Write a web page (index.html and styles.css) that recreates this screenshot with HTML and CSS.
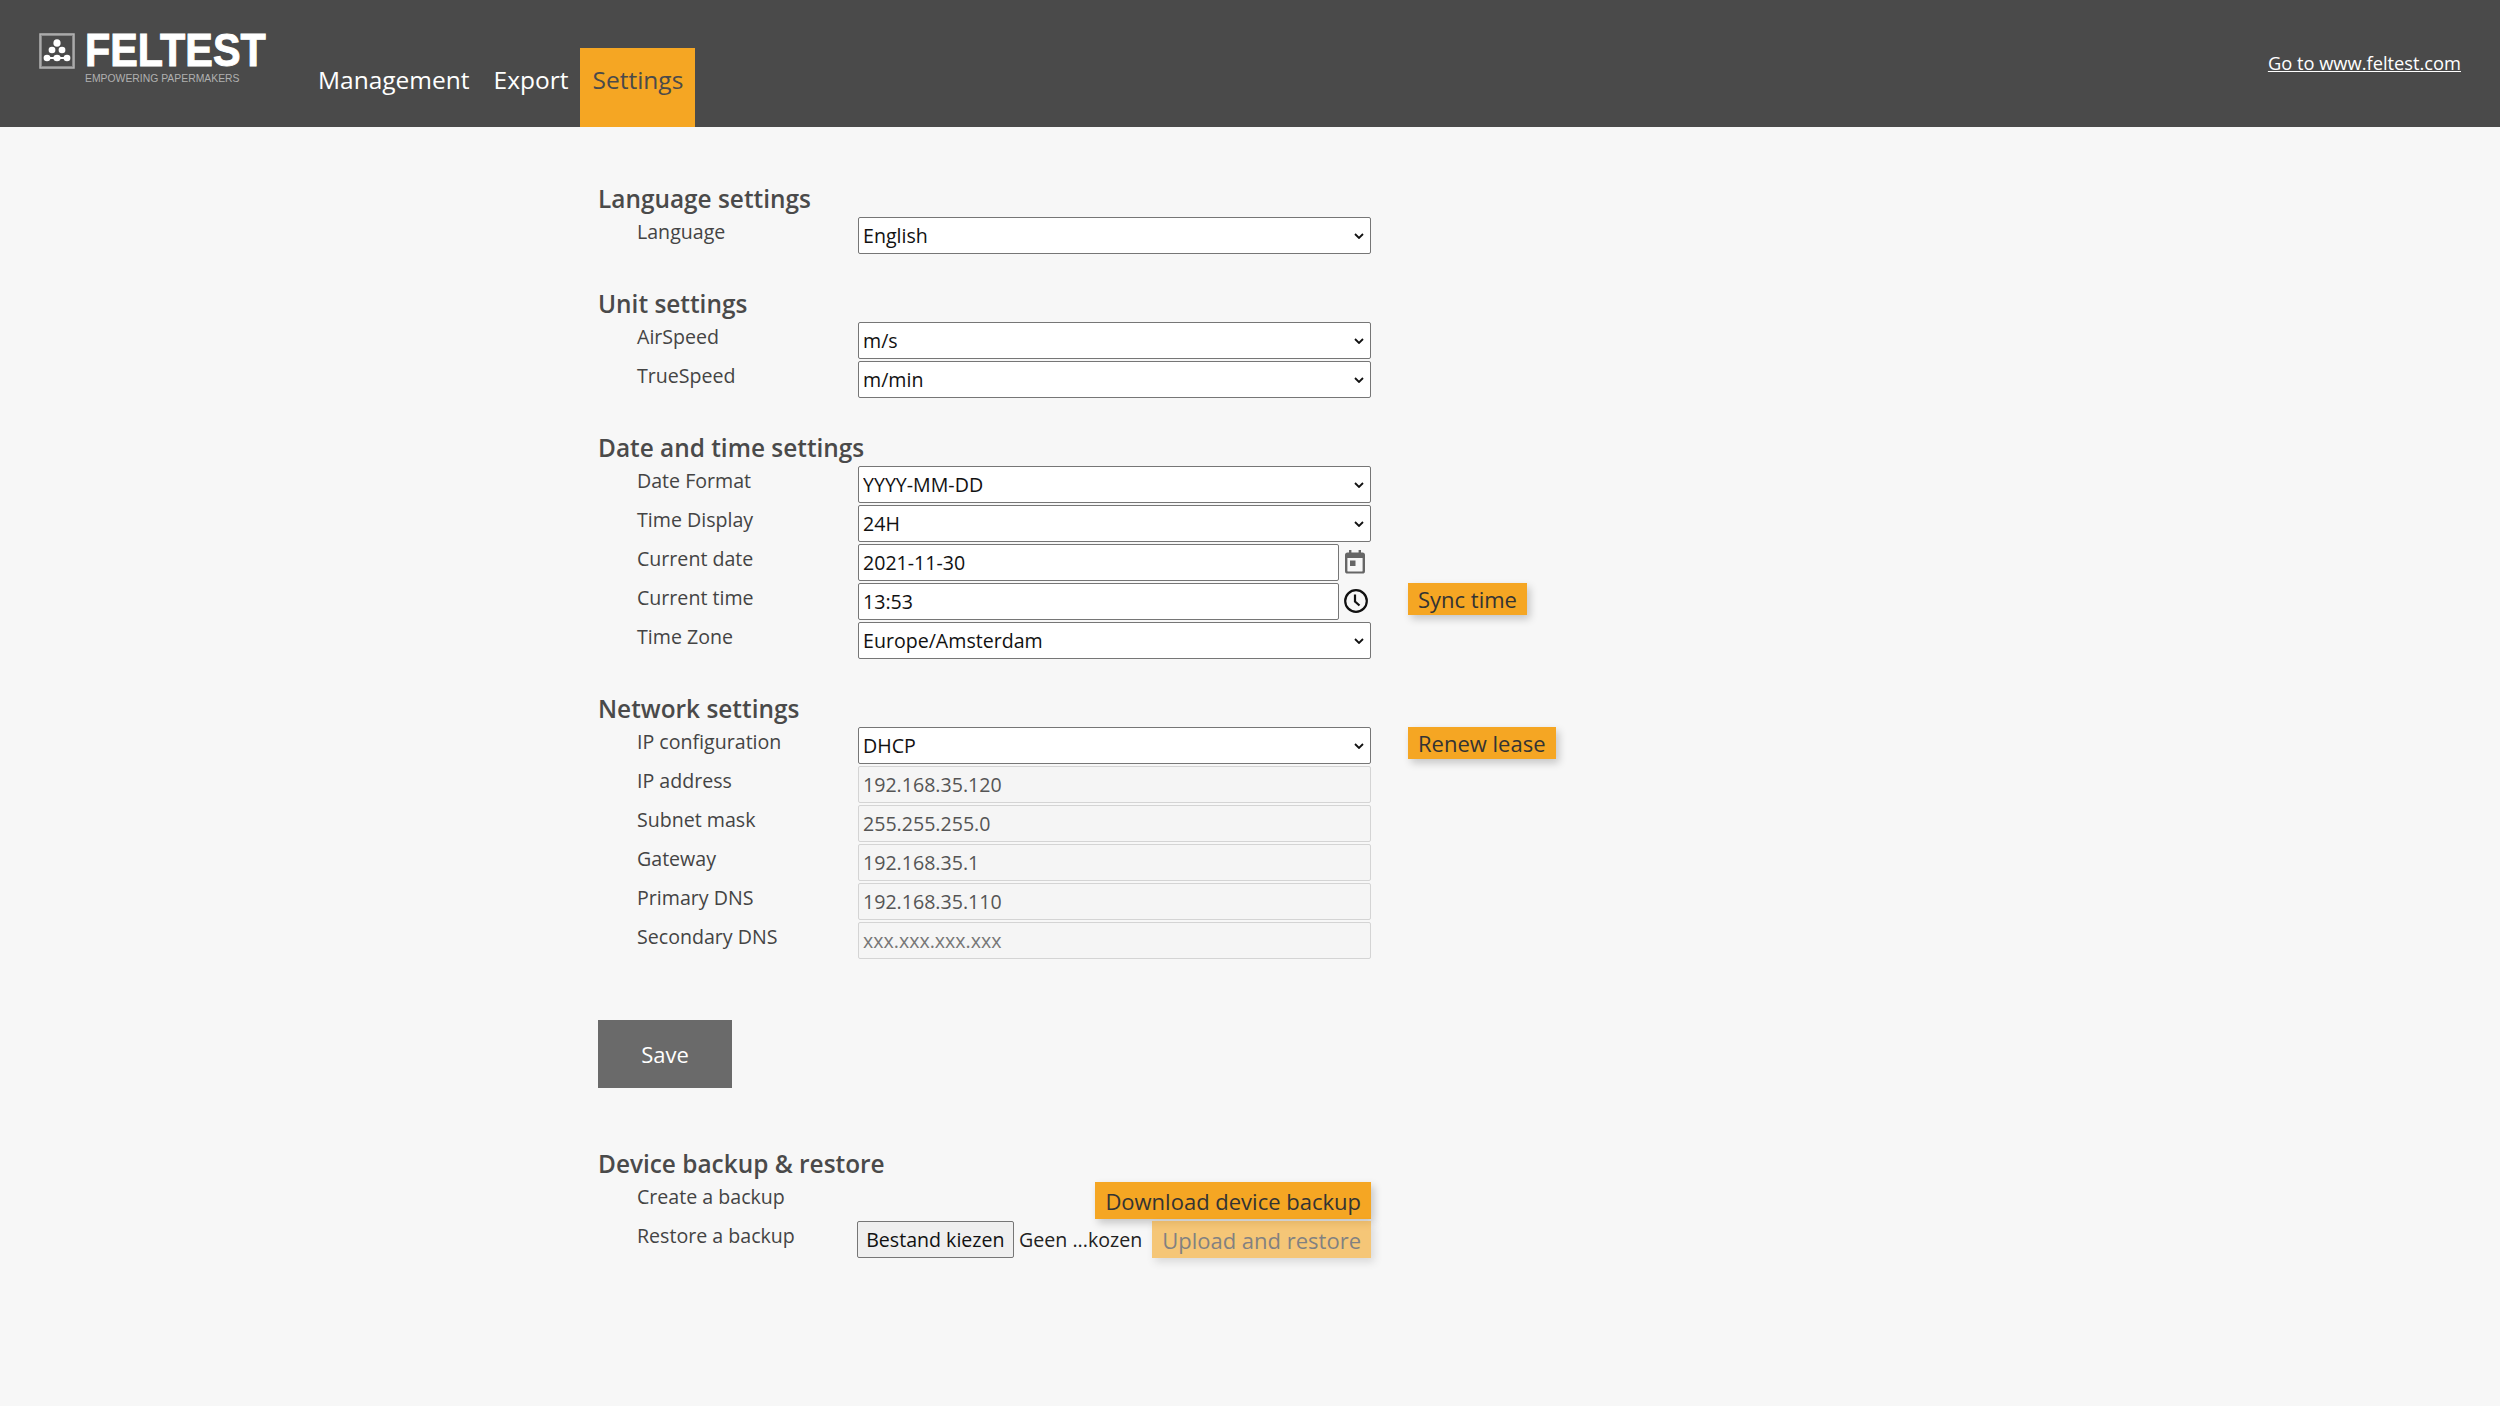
FILE: index.html
```html
<!DOCTYPE html>
<html lang="en">
<head>
    <meta charset="UTF-8">
    <meta name="viewport" content="width=device-width, initial-scale=1.0">
    <title>Feltest Settings</title>
    <link rel="stylesheet" href="styles.css">
</head>
<body>
    <header class="topbar">
        <div class="logo">
            <svg class="logo-mark" width="36" height="36" viewBox="0 0 36 36">
                <rect x="1" y="1" width="34" height="34" fill="#8a8a8a" stroke="#b5b5b5" stroke-width="1.5"/>
                <rect x="3" y="3" width="30" height="30" fill="#4a4a4a"/>
                <g fill="#fff">
                    <ellipse cx="18" cy="10" rx="3.6" ry="3.8"/>
                    <ellipse cx="13" cy="17" rx="3.4" ry="3.2"/>
                    <ellipse cx="23" cy="17" rx="3.4" ry="3.2"/>
                    <ellipse cx="8" cy="25" rx="3.4" ry="3.2"/>
                    <ellipse cx="18" cy="25" rx="3.6" ry="3.2"/>
                    <ellipse cx="28" cy="25" rx="3.4" ry="3.2"/>
                    <rect x="8" y="24" width="20" height="2"/>
                </g>
            </svg>
            <div class="logo-text">
                <div class="logo-name">FELTEST</div>
                <div class="logo-tag">EMPOWERING PAPERMAKERS</div>
            </div>
        </div>
        <nav class="menu">
            <a href="#" class="menu-item">Management</a>
            <a href="#" class="menu-item">Export</a>
            <a href="#" class="menu-item active">Settings</a>
        </nav>
        <a href="#" class="site-link">Go to www.feltest.com</a>
    </header>

    <main class="content">
        <section class="section">
            <h2>Language settings</h2>
            <div class="row">
                <label>Language</label>
                <select class="field"><option>English</option></select>
            </div>
        </section>

        <section class="section">
            <h2>Unit settings</h2>
            <div class="row">
                <label>AirSpeed</label>
                <select class="field"><option>m/s</option></select>
            </div>
            <div class="row">
                <label>TrueSpeed</label>
                <select class="field"><option>m/min</option></select>
            </div>
        </section>

        <section class="section">
            <h2>Date and time settings</h2>
            <div class="row">
                <label>Date Format</label>
                <select class="field"><option>YYYY-MM-DD</option></select>
            </div>
            <div class="row">
                <label>Time Display</label>
                <select class="field"><option>24H</option></select>
            </div>
            <div class="row">
                <label>Current date</label>
                <div class="with-icon">
                    <input type="text" class="field" value="2021-11-30">
                    <svg class="icon" width="24" height="24" viewBox="0 0 24 24">
                        <path fill="#666" d="M6 0h2.4v2.4h7.2V0H18v2.4h1.4A2.6 2.6 0 0 1 22 5v16a2.6 2.6 0 0 1-2.6 2.6H4.600A2.600 2.600 0 0 1 2 21V5a2.600 2.600 0 0 1 2.600-2.600H6V0zM4.400 8v13a.4.400 0 0 0 .4.400h14.400a.4.400 0 0 0 .4-.4V8H4.400z"/>
                        <rect x="7" y="10.500" width="5.500" height="5.500" fill="#666"/>
                    </svg>
                </div>
            </div>
            <div class="row">
                <label>Current time</label>
                <div class="with-icon">
                    <input type="text" class="field" value="13:53">
                    <svg class="icon" width="26" height="26" viewBox="0 0 26 26">
                        <circle cx="13" cy="13" r="10.800" fill="none" stroke="#111" stroke-width="2.200"/>
                        <path fill="none" stroke="#111" stroke-width="2.200" d="M12 6.500v7l4.500 4"/>
                    </svg>
                </div>
                <button type="button" class="action">Sync time</button>
            </div>
            <div class="row">
                <label>Time Zone</label>
                <select class="field"><option>Europe/Amsterdam</option></select>
            </div>
        </section>

        <section class="section">
            <h2>Network settings</h2>
            <div class="row">
                <label>IP configuration</label>
                <select class="field"><option>DHCP</option></select>
                <button type="button" class="action">Renew lease</button>
            </div>
            <div class="row">
                <label>IP address</label>
                <input type="text" class="field" value="192.168.35.120" disabled>
            </div>
            <div class="row">
                <label>Subnet mask</label>
                <input type="text" class="field" value="255.255.255.0" disabled>
            </div>
            <div class="row">
                <label>Gateway</label>
                <input type="text" class="field" value="192.168.35.1" disabled>
            </div>
            <div class="row">
                <label>Primary DNS</label>
                <input type="text" class="field" value="192.168.35.110" disabled>
            </div>
            <div class="row">
                <label>Secondary DNS</label>
                <input type="text" class="field" placeholder="xxx.xxx.xxx.xxx" disabled>
            </div>
        </section>

        <button type="button" class="save">Save</button>

        <section class="section">
            <h2>Device backup &amp; restore</h2>
            <div class="row">
                <label>Create a backup</label>
                <div class="backup">
                    <button type="button" class="action flush">Download device backup</button>
                </div>
            </div>
            <div class="row">
                <label>Restore a backup</label>
                <div class="backup">
                    <button type="button" class="file-btn">Bestand kiezen</button>
                    <span class="file-name">Geen ...kozen</span>
                    <button type="button" class="action flush faded">Upload and restore</button>
                </div>
            </div>
        </section>
    </main>
</body>
</html>
```

FILE: styles.css
```css
* {
    box-sizing: border-box;
}
body {
    margin: 0;
    min-height: 1406px;
    font-family: "Open Sans", Arial, sans-serif;
    background-color: #f7f7f7;
    color: #444;
}
.topbar {
    display: flex;
    height: 127px;
    background-color: #4a4a4a;
    position: relative;
}
.logo {
    display: flex;
    width: 306px;
    padding: 33px 0 0 39px;
    gap: 10px;
}
.logo-mark {
    flex: none;
}
.logo-name {
    font-family: "Liberation Sans", Arial, sans-serif;
    font-weight: bold;
    font-size: 47px;
    line-height: 34px;
    color: #fff;
    -webkit-text-stroke: 1px #fff;
    transform: scaleX(0.88);
    transform-origin: left;
}
.logo-tag {
    font-family: "Liberation Sans", Arial, sans-serif;
    font-size: 10.4px;
    line-height: 12px;
    margin-top: 6px;
    color: #b0b0b0;
    white-space: nowrap;
}
.menu {
    display: flex;
    align-items: flex-end;
    height: 127px;
}
.menu-item {
    display: block;
    height: 79px;
    padding: 15px 12px 0;
    font-size: 24.5px;
    line-height: 34px;
    color: #fff;
    text-decoration: none;
}
.active {
    background-color: #f5a623;
    color: #4a4a4a;
}
.site-link {
    position: absolute;
    right: 39px;
    top: 50px;
    font-size: 18.3px;
    color: #fff;
}
.content {
    padding: 54px 0 0 598px;
}
.section {
    margin-bottom: 30px;
}
h2 {
    margin: 0;
    font-size: 24.4px;
    font-weight: 600;
    line-height: 36px;
    color: #4a4a4a;
}
.row {
    display: flex;
    align-items: flex-start;
    height: 39px;
    padding-left: 39px;
}
label {
    width: 221px;
    flex: none;
    padding-top: 1px;
    font-size: 19.6px;
    line-height: 28px;
}
.field {
    width: 513px;
    height: 37px;
    padding: 0 4px;
    font-family: "Open Sans", Arial, sans-serif;
    font-size: 19.6px;
    color: #111;
    background-color: #fff;
    border: 1px solid #767676;
    border-radius: 2px;
}
select.field {
    padding: 0 24px 0 4px;
    appearance: none;
    background-image: url("data:image/svg+xml,%3Csvg xmlns='http://www.w3.org/2000/svg' width='10' height='6' viewBox='0 0 10 6'%3E%3Cpath d='M1 1l4 4 4-4' fill='none' stroke='%23111' stroke-width='1.800'/%3E%3C/svg%3E");
    background-repeat: no-repeat;
    background-position: right 6px center;
}
.field:disabled {
    background-color: #f5f5f5;
    border: 1px solid #d4d4d4;
    color: #555;
}
.field::placeholder {
    color: #777;
}
.with-icon {
    display: flex;
    align-items: center;
    gap: 4px;
    width: 513px;
    height: 37px;
}
.with-icon .field {
    width: 481px;
}
.icon {
    flex: none;
    margin-bottom: 2px;
}
.action {
    height: 32px;
    margin-left: 37px;
    padding: 0 10px;
    border: 0;
    font-family: "Open Sans", Arial, sans-serif;
    font-size: 22px;
    color: #333;
    background-color: #f5a623;
    box-shadow: 3px 4px 8px rgba(0, 0, 0, 0.2);
    white-space: nowrap;
}
.backup {
    display: flex;
    justify-content: flex-end;
    align-items: center;
    width: 513px;
    height: 37px;
}
.flush {
    margin-left: 0;
    height: 37px;
}
.faded {
    opacity: 0.6;
}
.file-btn {
    height: 37px;
    margin-right: 5px;
    padding: 0 8.5px;
    font-family: "Open Sans", Arial, sans-serif;
    font-size: 19.6px;
    color: #111;
    background-color: #efefef;
    border: 1px solid #767676;
    border-radius: 2px;
    white-space: nowrap;
}
.file-name {
    font-size: 19.6px;
    color: #222;
    margin-right: 10px;
    white-space: nowrap;
}
.save {
    display: block;
    width: 134px;
    height: 68px;
    margin: 59px 0 58px;
    border: 0;
    font-family: "Open Sans", Arial, sans-serif;
    font-size: 22px;
    color: #fff;
    background-color: #6a6a6a;
}
```
